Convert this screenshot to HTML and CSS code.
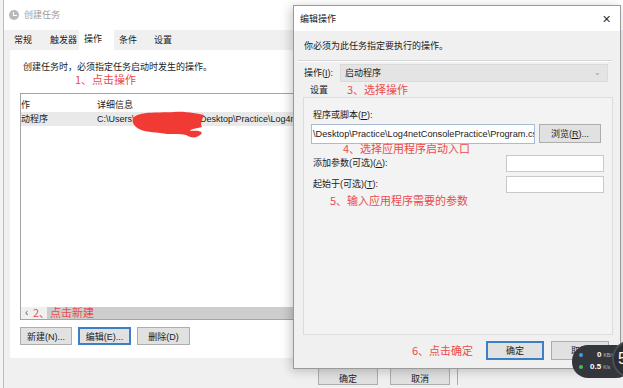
FILE: index.html
```html
<!DOCTYPE html>
<html lang="zh-CN">
<head>
  <meta charset="UTF-8">
  <title>创建任务 - 编辑操作</title>
  <link rel="stylesheet" href="styles.css">
</head>
<body>

  <!-- background window: 创建任务 -->
  <div class="win main-win">
    <div class="titlebar">
      <span class="app-icon"></span>
      <span class="title-text">创建任务</span>
    </div>

    <div class="tabs">
      <span class="tab t1">常规</span>
      <span class="tab t2">触发器</span>
      <span class="tab t3 active">操作</span>
      <span class="tab t4">条件</span>
      <span class="tab t5">设置</span>
    </div>

    <div class="panel">
      <p class="note">创建任务时，必须指定任务启动时发生的操作。</p>
      <p class="hint hint-1">1、点击操作</p>

      <div class="listview">
        <div class="lv-row lv-head">
          <span class="col-a">作</span>
          <span class="col-b">详细信息</span>
        </div>
        <div class="lv-row lv-sel">
          <span class="col-a">动程序</span>
          <span class="col-b">C:\Users\xxxxxxxxxxxxxx\Desktop\Practice\Log4netConsolePractice\Program.cs</span>
        </div>
        <svg class="scribble" width="80" height="30" viewBox="0 0 80 30">
          <path d="M4 6 C12 0 30 2 44 1 C56 0 68 3 74 4 C72 9 70 13 72 16 C66 18 62 17 60 20 C64 20 70 19 72 22 C68 27 62 28 56 24 C50 22 40 24 30 22 C20 21 10 20 6 16 C2 12 2 9 4 6 Z" fill="#f23a34"/>
        </svg>
        <div class="hscroll">
          <span class="arrow">&lsaquo;</span>
          <span class="thumb"></span>
        </div>
        <p class="hint hint-2">2、点击新建</p>
      </div>

      <div class="btn-row">
        <button class="btn w-new">新建(N)...</button>
        <button class="btn w-edit focus">编辑(E)...</button>
        <button class="btn w-del">删除(D)</button>
      </div>
    </div>

    <div class="main-foot">
      <button class="btn foot-btn">确定</button>
      <button class="btn foot-btn">取消</button>
      <span class="foot-edge"></span>
    </div>
  </div>

  <!-- dialog: 编辑操作 -->
  <div class="win dialog">
    <div class="dlg-title">
      <span>编辑操作</span>
      <span class="close">&#x2715;</span>
    </div>

    <div class="dlg-body">
      <p class="dlg-desc">你必须为此任务指定要执行的操作。</p>
      <div class="sep"></div>

      <div class="op-row">
        <span class="op-label">操作(<u>I</u>):</span>
        <div class="select">
          <span>启动程序</span>
          <span class="chev">&#8964;</span>
        </div>
      </div>

      <div class="group-head">
        <span class="group-tab">设置</span>
        <span class="hint hint-3">3、选择操作</span>
      </div>

      <div class="group">
        <p class="field-label">程序或脚本(<u>P</u>):</p>
        <div class="path-row">
          <div class="input path-input"><span>\Desktop\Practice\Log4netConsolePractice\Program.cs</span></div>
          <button class="btn browse">浏览(<u>R</u>)...</button>
        </div>
        <p class="hint hint-4">4、选择应用程序启动入口</p>
        <div class="arg-row">
          <span class="field-label">添加参数(可选)(<u>A</u>):</span>
          <div class="input small-input"></div>
        </div>
        <div class="arg-row">
          <span class="field-label">起始于(可选)(<u>T</u>):</span>
          <div class="input small-input"></div>
        </div>
        <p class="hint hint-5">5、输入应用程序需要的参数</p>
      </div>

      <div class="dlg-foot">
        <span class="hint hint-6">6、点击确定</span>
        <button class="btn dlg-btn focus">确定</button>
        <button class="btn dlg-btn">取消</button>
      </div>
    </div>
  </div>

  <!-- network speed floating ball -->
  <div class="netball">
    <div class="net-line"><span class="dot blue"></span><b>0</b><small>KB/s</small></div>
    <div class="net-line"><span class="dot green"></span><b>0.5</b><small>K/s</small></div>
  </div>
  <div class="netcircle">5</div>

</body>
</html>
```

FILE: styles.css
```css
* {
  box-sizing: border-box;
}

body {
  margin: 0;
  width: 623px;
  height: 388px;
  overflow: hidden;
  position: relative;
  background: #f3f3f3;
  font-family: "Liberation Sans", "Noto Sans CJK SC", sans-serif;
  font-size: 9px;
  line-height: 12px;
  color: #1a1a1a;
}

p {
  margin: 0;
}

u {
  text-decoration: underline;
}

.win {
  position: absolute;
}

/* ---------- background window ---------- */

.main-win {
  left: 3px;
  top: 0;
  width: 640px;
  height: 388px;
  background: #f0f0f0;
  border-left: 1px solid #bdbdbd;
}

.titlebar {
  height: 30px;
  background: #fff;
  display: flex;
  align-items: center;
  padding-left: 5px;
  gap: 5px;
}

.app-icon {
  width: 10px;
  height: 10px;
  border-radius: 50%;
  background: #b9b9b9;
  position: relative;
}

.app-icon::after {
  content: "";
  position: absolute;
  left: 4px;
  top: 2px;
  width: 3px;
  height: 3px;
  border-left: 1px solid #fff;
  border-bottom: 1px solid #fff;
}

.title-text {
  color: #9a9a9a;
}

.tabs {
  height: 20px;
  display: flex;
  align-items: flex-end;
  padding-left: 2px;
}

.tab {
  height: 19px;
  line-height: 19px;
  padding-left: 8px;
}

.t1 { width: 36px; }
.t2 { width: 37px; }
.t3 { width: 35px; padding-left: 5px; }
.t4 { width: 35px; padding-left: 5px; }
.t5 { width: 35px; padding-left: 5px; }

.tab.active {
  background: #fff;
  height: 20px;
  line-height: 18px;
}

.panel {
  margin-left: 6px;
  width: 300px;
  height: 308px;
  background: #fff;
  padding-top: 11px;
}

.note {
  padding-left: 13px;
}

.hint {
  color: #ec4b4b;
  font-family: "Noto Sans CJK SC", sans-serif;
  font-size: 11px;
  line-height: 13px;
}

.hint-1 {
  padding-left: 65px;
}

.listview {
  position: relative;
  margin: 7px 0 0 10px;
  width: 300px;
  height: 227px;
  border: 1px solid #a4a4a4;
  border-right: none;
}

.lv-row {
  display: flex;
  white-space: nowrap;
  overflow: hidden;
}

.lv-head {
  height: 18px;
  align-items: flex-end;
  padding-bottom: 1px;
}

.lv-sel {
  height: 14px;
  align-items: center;
  background: #e9e9e9;
}

.col-a {
  width: 76px;
  flex: none;
}

.scribble {
  position: absolute;
  left: 109px;
  top: 17px;
}

.hscroll {
  position: absolute;
  left: 0;
  right: 0;
  bottom: 0;
  height: 12px;
  background: #f0f0f0;
  display: flex;
  align-items: center;
}

.arrow {
  width: 26px;
  padding-left: 4px;
  color: #606060;
  font-size: 10px;
}

.thumb {
  flex: 1;
  height: 12px;
  background: #cdcdcd;
}

.hint-2 {
  position: absolute;
  left: 12px;
  bottom: 0;
}

.btn {
  font-family: "Liberation Sans", "Noto Sans CJK SC", sans-serif;
  font-size: 9px;
  background: #e1e1e1;
  border: 1px solid #adadad;
  color: #1a1a1a;
  padding: 0;
}

.btn.focus {
  border: 2px solid #3c7fc6;
}

.btn-row {
  display: flex;
  margin: 7px 0 0 10px;
  gap: 6px;
}

.btn-row .btn {
  height: 18px;
}

.w-new { width: 52px; }
.w-edit { width: 53px; }
.w-del { width: 53px; }

.main-foot {
  display: flex;
  padding: 5px 0 0 314px;
  gap: 12px;
}

.foot-btn {
  width: 60px;
  height: 22px;
  padding-top: 8px;
}

.foot-edge {
  width: 2px;
  height: 22px;
  margin-left: -5px;
  border-left: 1px solid #adadad;
}

/* ---------- dialog ---------- */

.dialog {
  left: 293px;
  top: 5px;
  width: 328px;
  height: 364px;
  background: #f0f0f0;
  border: 1px solid #9a9a9a;
  box-shadow: -2px 2px 10px rgba(0, 0, 0, 0.22);
}

.dlg-title {
  height: 25px;
  background: #fff;
  display: flex;
  align-items: center;
  justify-content: space-between;
  padding: 0 9px 0 6px;
}

.close {
  font-size: 11px;
  color: #333;
}

.dlg-body {
  padding-top: 9px;
}

.dlg-desc {
  padding-left: 10px;
}

.sep {
  margin: 8px 8px 0 4px;
  height: 2px;
  border-top: 1px solid #d5d5d5;
  border-bottom: 1px solid #fff;
}

.op-row {
  display: flex;
  align-items: center;
  margin-top: 2px;
  padding-left: 10px;
}

.op-label {
  width: 36px;
}

.select {
  width: 268px;
  height: 18px;
  background: #e4e4e4;
  border: 1px solid #dadada;
  display: flex;
  justify-content: space-between;
  align-items: center;
  padding: 0 6px 0 4px;
}

.chev {
  font-size: 8px;
  color: #999;
  line-height: 6px;
}

.group-head {
  display: flex;
  align-items: center;
  height: 15px;
  padding-left: 16px;
}

.group-tab {
  width: 37px;
}

.group {
  margin-left: 9px;
  width: 310px;
  height: 238px;
  border: 1px solid #dcdcdc;
  background: #f3f3f3;
  padding: 11px 0 0 9px;
}

.path-row {
  display: flex;
  align-items: flex-start;
  gap: 4px;
  margin: 3px 0 0 -2px;
}

.input {
  background: #fff;
  border: 1px solid #c9c9c9;
}

.path-input {
  width: 224px;
  height: 20px;
  border-color: #a9bcd6;
  overflow: hidden;
  white-space: nowrap;
  font-size: 9.2px;
  line-height: 18px;
  padding-left: 1px;
}

.browse {
  width: 62px;
  height: 19px;
}

.hint-4 {
  margin: -2px 0 0 30px;
  line-height: 12px;
}

.arg-row {
  display: flex;
  justify-content: space-between;
  align-items: center;
  width: 291px;
  height: 18px;
  margin-bottom: 3px;
}

.small-input {
  width: 98px;
  height: 17px;
}

.hint-5 {
  margin: -2px 0 0 17px;
}

.dlg-foot {
  display: flex;
  align-items: center;
  justify-content: flex-end;
  padding: 6px 11px 0 0;
  gap: 7px;
}

.hint-6 {
  margin-right: 6px;
}

.dlg-btn {
  width: 58px;
  height: 19px;
}

/* ---------- net speed ball ---------- */

.netball {
  position: absolute;
  left: 572px;
  top: 345px;
  width: 60px;
  height: 33px;
  border-radius: 16px;
  background: #33373c;
  padding: 4px 0 0 7px;
  color: #fff;
}

.net-line {
  display: flex;
  align-items: center;
  height: 12px;
  gap: 2px;
  font-size: 8px;
}

.net-line b {
  font-weight: bold;
}

.net-line small {
  font-size: 5px;
  color: #bbb;
}

.dot {
  width: 4px;
  height: 4px;
  border-radius: 50%;
  margin-right: 5px;
}

.blue { background: #38a3e0; }
.green { background: #3fc15a; }

.net-line:first-child .dot {
  margin-right: 12px;
}

.netcircle {
  position: absolute;
  left: 612px;
  top: 340px;
  width: 38px;
  height: 38px;
  border-radius: 50%;
  background: #2b2e32;
  border: 2px solid #4a4e54;
  color: #fff;
  font-size: 16px;
  line-height: 34px;
  padding-left: 4px;
  font-family: "Liberation Sans", sans-serif;
}
```
